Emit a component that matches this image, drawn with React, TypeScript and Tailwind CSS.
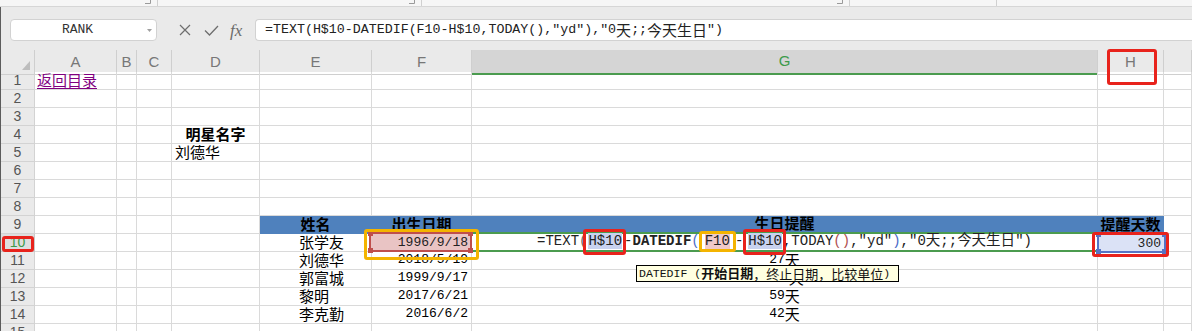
import type { ReactNode } from "react";

const GRID = "grid grid-cols-[34px_82px_20px_35px_88px_112px_100px_626px_66px_1fr]";
const MONO = "font-['Liberation_Mono','Noto_Sans_CJK_SC',monospace]";
const HAN = "font-['Noto_Sans_CJK_SC',sans-serif]";

// split a string so Han characters can get their own (larger) size
function Mixed({ text, han }: { text: string; han: string }) {
  const parts = text.split(/([\u3000-\u9fff\uff00-\uffef]+)/);
  return (
    <>
      {parts.map((p, i) =>
        i % 2 ? (
          <span key={i} className={`${HAN} ${han}`}>
            {p}
          </span>
        ) : (
          p
        ),
      )}
    </>
  );
}

// red / orange annotation frame drawn over the sheet
function Mark({ orange = false, className }: { orange?: boolean; className: string }) {
  return (
    <span
      className={`pointer-events-none absolute z-20 rounded-[3px] border-[3px] ${
        orange ? "border-[#f4b400]" : "border-[#e8231c]"
      } ${className}`}
    />
  );
}

// range-reference frame with the little corner handles
function RefBox({ blue = false, className, children }: { blue?: boolean; className: string; children: ReactNode }) {
  const edge = blue ? "border-[#5673c4] bg-[#dbe2f6]" : "border-[#bf4f4c] bg-[#e9c4c4]";
  const dot = blue ? "bg-[#5673c4]" : "bg-[#bf4f4c]";
  return (
    <div className={`absolute z-10 flex items-end justify-end border-2 ${edge} ${className}`}>
      {children}
      <span className={`absolute -left-[3px] -top-[3px] h-[5px] w-[5px] ${dot}`} />
      <span className={`absolute -right-[3px] -top-[3px] h-[5px] w-[5px] ${dot}`} />
      <span className={`absolute -left-[3px] -bottom-[3px] h-[5px] w-[5px] ${dot}`} />
      <span className={`absolute -right-[3px] -bottom-[3px] h-[5px] w-[5px] ${dot}`} />
    </div>
  );
}

function Cell({
  children,
  className = "",
  edge = "border-r border-b border-[#dadada]",
}: {
  children?: ReactNode;
  className?: string;
  edge?: string;
}) {
  return (
    <div className={`relative flex h-[18px] items-end whitespace-nowrap leading-[18px] ${edge} ${className}`}>
      {children}
    </div>
  );
}

function RowHead({ n, active = false }: { n: number; active?: boolean }) {
  return (
    <div
      className={
        active
          ? "relative flex h-[18px] items-center justify-center border-r border-b border-[#c9c9c9] bg-[#dedede] text-[14px] text-[#3d9a4a]"
          : "flex h-[18px] items-center justify-center border-r border-b border-[#d3d3d3] bg-[#eaeaea] text-[14px] text-[#555]"
      }
    >
      {n}
      {active && <Mark className="left-[1px] right-0 top-[2px] -bottom-[1px]" />}
    </div>
  );
}

function Row({ n, a, d, e, f, g }: { n: number; a?: ReactNode; d?: ReactNode; e?: string; f?: string; g?: string }) {
  return (
    <div className={GRID}>
      <RowHead n={n} />
      <Cell className="pl-[2px]">{a}</Cell>
      <Cell />
      <Cell />
      <Cell>{d}</Cell>
      <Cell className={`pl-[39px] ${HAN} text-[15px]`}>{e}</Cell>
      <Cell className={`justify-end pr-[3px] ${MONO} text-[13px]`}>{f}</Cell>
      <Cell className={`justify-center ${MONO} text-[13px]`}>{g && <Mixed text={g} han="text-[15px]" />}</Cell>
      <Cell />
      <Cell />
    </div>
  );
}

function Hl({ pink = false, className = "", children }: { pink?: boolean; className?: string; children: ReactNode }) {
  return (
    <span className={`relative ${pink ? "bg-[#f0c9c9]" : "bg-[#c8d2ef]"} ${className}`}>
      {children}
      <Mark
        orange={pink}
        className={pink ? "-left-[6px] -right-[6px] -top-[2px] -bottom-[3px]" : "-left-[5px] -right-[4px] -top-[4px] -bottom-[6px]"}
      />
    </span>
  );
}

function TopStrip() {
  const corner = (
    <svg className="absolute right-[6px] top-0" width="6" height="4" viewBox="0 0 6 4">
      <path d="M0 3.5H5.5V0" fill="none" stroke="#9a9a9a" />
    </svg>
  );
  return (
    <div className="flex h-[7px] border-b border-[#d6d6d6] bg-[#f6f6f6]">
      <div className="relative w-[158px] border-r border-[#d0d0d0]">{corner}</div>
      <div className="relative w-[264px] border-r border-[#d0d0d0]">{corner}</div>
      <div className="relative w-[428px] border-r border-[#d0d0d0]">{corner}</div>
      <div className="w-[147px] border-r border-[#d0d0d0]" />
      <div className="flex-1" />
    </div>
  );
}

function FormulaBar() {
  return (
    <div className="flex h-[43px] items-start pt-[12px]">
      <div className="relative ml-[9px] flex h-[22px] w-[147px] items-center rounded-[4px] border border-[#d2d2d2] bg-white">
        <span className={`flex-1 pr-[12px] text-center ${MONO} text-[13px] text-[#333]`}>RANK</span>
        <svg className="absolute right-[4px] top-[9px]" width="5" height="3" viewBox="0 0 5 3">
          <path d="M0 0H5L2.5 3Z" fill="#a0a0a0" />
        </svg>
      </div>
      <div className="flex h-[22px] w-[98px] items-center">
        <svg className="ml-[22px]" width="12" height="12" viewBox="0 0 12 12">
          <path d="M1 1L11 11M11 1L1 11" stroke="#6e6e6e" strokeWidth="1.2" />
        </svg>
        <svg className="ml-[13px]" width="15" height="11" viewBox="0 0 15 11">
          <path d="M1 5.5L5.5 10L14 1" fill="none" stroke="#6e6e6e" strokeWidth="1.3" />
        </svg>
        <span className="ml-[11px] font-['Liberation_Serif',serif] text-[17px] italic leading-none text-[#6a6a6a]">fx</span>
      </div>
      <div
        className={`flex h-[22px] flex-1 items-center rounded-l-[4px] border border-r-0 border-[#d2d2d2] bg-white pl-[9px] ${MONO} text-[13.3px] text-[#222]`}
      >
        <Mixed text={'=TEXT(H$10-DATEDIF(F10-H$10,TODAY(),"yd"),"0天;;今天生日")'} han="text-[15px]" />
      </div>
    </div>
  );
}

function ColumnHeads() {
  const letters = ["A", "B", "C", "D", "E", "F", "G", "H", ""];
  return (
    <div className={`${GRID} h-[22px] text-[15px]`}>
      <div className="relative border-r border-b border-[#cfcfcf]">
        <svg className="absolute bottom-[4px] right-[4px]" width="8" height="9" viewBox="0 0 8 9">
          <path d="M8 0V9H0Z" fill="#bdbdbd" />
        </svg>
      </div>
      {letters.map((l, i) =>
        l === "G" ? (
          <div
            key={i}
            className="flex items-center justify-center border-r border-b-2 border-[#cfcfcf] border-b-[#4b9b4f] bg-[#d5d5d5] text-[#3d9a4a]"
          >
            {l}
          </div>
        ) : (
          <div key={i} className="relative flex items-center justify-center border-r border-b border-[#cfcfcf] text-[#777]">
            {l}
            {l === "H" && <Mark className="left-[9px] right-[6px] -top-[1px] -bottom-[11px]" />}
          </div>
        ),
      )}
    </div>
  );
}

const people = [
  { name: "刘德华", date: "2018/5/19", days: "27天" },
  { name: "郭富城", date: "1999/9/17", days: "148天" },
  { name: "黎明", date: "2017/6/21", days: "59天" },
  { name: "李克勤", date: "2016/6/2", days: "42天" },
];

export default function App() {
  const band = "border-r border-b border-[#4f81bd]";
  return (
    <div className="relative h-[331px] w-[1192px] overflow-hidden bg-[#eaeaea] font-['Liberation_Sans',sans-serif] text-black">
      <TopStrip />
      <div className="border-l border-[#5c5c5c]">
        <FormulaBar />
        <ColumnHeads />
        <div className="bg-white">
          <Row
            n={1}
            a={<span className={`${HAN} text-[15px] text-[#800080] underline underline-offset-2`}>返回目录</span>}
          />
          <Row n={2} />
          <Row n={3} />
          <Row n={4} d={<span className={`w-full text-center ${HAN} text-[15px] font-bold`}>明星名字</span>} />
          <Row n={5} d={<span className={`pl-[3px] ${HAN} text-[15px]`}>刘德华</span>} />
          <Row n={6} />
          <Row n={7} />
          <Row n={8} />

          {/* row 9: table header band */}
          <div className={GRID}>
            <RowHead n={9} />
            <Cell />
            <Cell />
            <Cell />
            <Cell />
            <Cell edge={band} className={`justify-center bg-[#4f81bd] ${HAN} text-[15px] font-bold`}>姓名</Cell>
            <Cell edge={band} className={`justify-center bg-[#4f81bd] ${HAN} text-[15px] font-bold`}>出生日期</Cell>
            <Cell
              edge="border-r border-b-2 border-[#4f81bd] border-b-[#4b9b4f]"
              className={`justify-center bg-[#4f81bd] ${HAN} text-[15px] font-bold`}
            >
              生日提醒
            </Cell>
            <Cell edge={band} className={`justify-center bg-[#4f81bd] ${HAN} text-[15px] font-bold`}>提醒天数</Cell>
            <Cell />
          </div>

          {/* row 10: cell G10 in edit mode */}
          <div className={GRID}>
            <RowHead n={10} active />
            <Cell />
            <Cell />
            <Cell />
            <Cell />
            <Cell className={`pl-[39px] ${HAN} text-[15px]`}>张学友</Cell>
            <Cell>
              <RefBox className="-left-[3px] -right-[1px] -top-[2px] -bottom-[1px]">
                <span className={`pr-[2px] ${MONO} text-[13px] leading-[15px] text-[#222]`}>1996/9/18</span>
              </RefBox>
              <Mark orange className="-left-[8px] -right-[8px] -top-[5px] -bottom-[9px]" />
            </Cell>
            <Cell edge="border-r border-b-2 border-[#dadada] border-b-[#4b9b4f]" className="justify-center">
              <span className={`${MONO} text-[14px] text-[#222]`}>
                =TEXT<span className="text-[#666]">(</span>
                <Hl className="ml-[1px]">H$10</Hl>
                <span className="ml-[2px]">-</span>
                <b>DATEDIF</b>
                <span className="text-[#4a6bc8]">(</span>
                <Hl pink className="mx-[5px]">F10</Hl>-<Hl className="ml-[5px]">H$10</Hl>
                <span className="ml-[1px]">,TODAY</span>
                <span className="text-[#b05050]">()</span>,{'"yd"'}
                <span className="text-[#4a6bc8]">)</span>,
                <Mixed text={'"0天;;今天生日")'} han="text-[14.5px]" />
              </span>
            </Cell>
            <Cell>
              <RefBox blue className="-left-[1px] -right-[3px] -top-[1px] -bottom-[2px]">
                <span className={`pr-[3px] ${MONO} text-[13px] leading-[15px] text-[#222]`}>300</span>
              </RefBox>
              <Mark className="-left-[6px] -right-[6px] -top-[2px] -bottom-[6px]" />
            </Cell>
            <Cell />
          </div>

          {people.map((p, i) => (
            <Row key={p.name} n={11 + i} e={p.name} f={p.date} g={p.days} />
          ))}
          <Row n={15} />
        </div>
      </div>

      {/* function hint for DATEDIF */}
      <div
        className={`absolute left-[636px] top-[265px] z-30 flex h-[17px] w-[263px] items-center whitespace-nowrap border border-black bg-[#ffffe1] pl-[2px] ${MONO} text-[11.5px] text-[#111]`}
      >
        DATEDIF (
        <b>
          <Mixed text="开始日期" han="text-[13px]" />
        </b>
        <Mixed text="，终止日期，比较单位" han="text-[13px]" />)
      </div>
    </div>
  );
}
